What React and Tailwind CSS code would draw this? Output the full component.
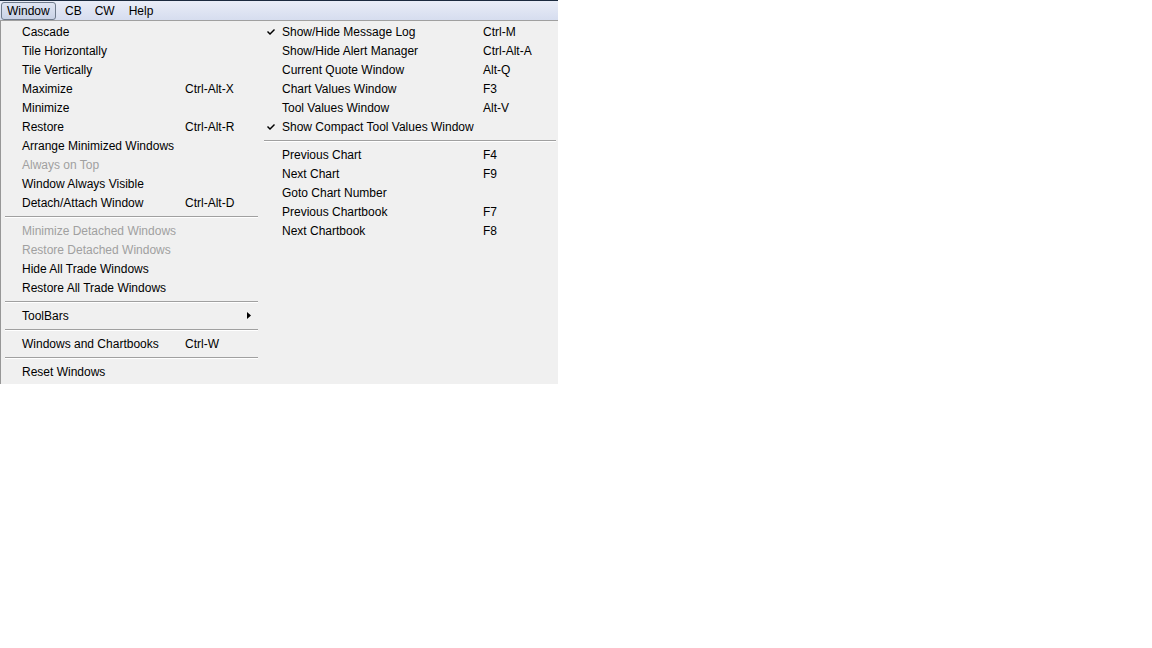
import React from "react";

const leftItems = [
  { label: "Cascade" },
  { label: "Tile Horizontally" },
  { label: "Tile Vertically" },
  { label: "Maximize", key: "Ctrl-Alt-X" },
  { label: "Minimize" },
  { label: "Restore", key: "Ctrl-Alt-R" },
  { label: "Arrange Minimized Windows" },
  { label: "Always on Top", disabled: true },
  { label: "Window Always Visible" },
  { label: "Detach/Attach Window", key: "Ctrl-Alt-D" },
  { sep: true },
  { label: "Minimize Detached Windows", disabled: true },
  { label: "Restore Detached Windows", disabled: true },
  { label: "Hide All Trade Windows" },
  { label: "Restore All Trade Windows" },
  { sep: true },
  { label: "ToolBars", sub: true },
  { sep: true },
  { label: "Windows and Chartbooks", key: "Ctrl-W" },
  { sep: true },
  { label: "Reset Windows" },
];

const rightItems = [
  { label: "Show/Hide Message Log", key: "Ctrl-M", checked: true },
  { label: "Show/Hide Alert Manager", key: "Ctrl-Alt-A" },
  { label: "Current Quote Window", key: "Alt-Q" },
  { label: "Chart Values Window", key: "F3" },
  { label: "Tool Values Window", key: "Alt-V" },
  { label: "Show Compact Tool Values Window", checked: true },
  { sep: true },
  { label: "Previous Chart", key: "F4" },
  { label: "Next Chart", key: "F9" },
  { label: "Goto Chart Number" },
  { label: "Previous Chartbook", key: "F7" },
  { label: "Next Chartbook", key: "F8" },
];

const Check = () => (
  <svg width="8" height="8" viewBox="0 0 8 8" className="block">
    <path d="M0 4 L1 3 L3 5 L7 1 L8 2 L3 7 Z" fill="#000" />
  </svg>
);

const Separator = ({ className }) => (
  <div className={`h-[9px] flex items-center ${className}`}>
    <div className="w-full h-0 border-t border-[#a0a0a0] border-b border-b-white" />
  </div>
);

const LeftRow = ({ item }) => (
  <div
    className={`h-[19px] flex items-center pl-[21px] ${
      item.disabled ? "text-[#a0a0a0]" : "text-black"
    }`}
  >
    <span className="w-[163px] whitespace-nowrap">{item.label}</span>
    {item.key && <span className="whitespace-nowrap">{item.key}</span>}
    {item.sub && (
      <svg width="4" height="7" viewBox="0 0 4 7" className="ml-[62px]">
        <path d="M0 0 L4 3.5 L0 7 Z" fill="#000" />
      </svg>
    )}
  </div>
);

const RightRow = ({ item }) => (
  <div className="h-[19px] flex items-center text-black">
    <span className="w-[18px] pl-[3px] flex items-center">
      {item.checked && <Check />}
    </span>
    <span className="w-[201px] whitespace-nowrap">{item.label}</span>
    {item.key && <span className="whitespace-nowrap">{item.key}</span>}
  </div>
);

export default function App() {
  return (
    <div
      className="w-[558px] text-[12px] leading-none select-none"
      style={{ fontFamily: '"Liberation Sans", Arial, sans-serif' }}
    >
      {/* menu bar */}
      <div className="h-px bg-[#1b2a3e]" />
      <div className="h-[19px] flex items-center bg-gradient-to-b from-[#e9edf7] to-[#d6ddef]">
        <div className="ml-px h-[18px] w-[55px] flex items-center pl-[5px] rounded-[3px] border border-[#6f7b8c] bg-gradient-to-b from-[#dfe5f2] to-[#c9d2e6]">
          Window
        </div>
        <span className="ml-[9px]">CB</span>
        <span className="ml-[13px]">CW</span>
        <span className="ml-[14px]">Help</span>
      </div>
      <div className="h-px bg-[#a0a0a0]" />

      {/* drop-down */}
      <div className="flex bg-[#f0f0f0] border-l border-[#979797] pt-px h-[363px]">
        <div className="w-[257px] flex flex-col">
          {leftItems.map((item, i) =>
            item.sep ? (
              <Separator key={i} className="pl-[4px]" />
            ) : (
              <LeftRow key={i} item={item} />
            )
          )}
        </div>
        <div className="flex-1 flex flex-col pl-[6px] pr-[2px]">
          {rightItems.map((item, i) =>
            item.sep ? <Separator key={i} /> : <RightRow key={i} item={item} />
          )}
        </div>
      </div>
    </div>
  );
}
